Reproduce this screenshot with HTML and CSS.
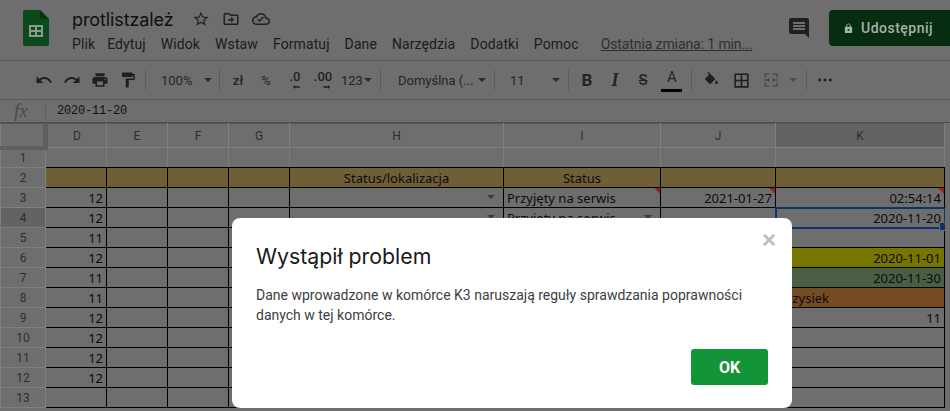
FILE: index.html
```html
<!DOCTYPE html>
<html lang="pl">
<head>
<meta charset="utf-8">
<title>protlistzależ</title>
<link rel="stylesheet" href="styles.css">
</head>
<body>
<div class="page">
  <header class="top">
    <svg class="logo" viewBox="0 0 26 36"><path fill="#0c4a1c" d="M2 0h15l9 9v25a2 2 0 0 1-2 2H2a2 2 0 0 1-2-2V2a2 2 0 0 1 2-2z"/><path fill="#08350f" d="M17 0l9 9h-9z"/><path fill="#8a9a8e" d="M6 15h14v12H6zm2 2v3h4v-3zm6 0v3h4v-3zm-6 5v3h4v-3zm6 0v3h4v-3z" fill-rule="evenodd"/></svg>
    <div class="titles">
      <div class="title-row">
        <span class="doc-title">protlistzależ</span>
        <svg class="ti star" viewBox="0 0 24 24"><path d="M22 9.24l-7.19-.62L12 2 9.19 8.63 2 9.24l5.46 4.73L5.82 21 12 17.27 18.18 21l-1.63-7.03L22 9.24zM12 15.4l-3.76 2.27 1-4.28-3.32-2.88 4.38-.38L12 6.1l1.71 4.04 4.38.38-3.32 2.88 1 4.28L12 15.4z"/></svg>
        <svg class="ti folder" viewBox="0 0 24 24"><path d="M20 6h-8l-2-2H4c-1.1 0-2 .9-2 2v12c0 1.1.9 2 2 2h16c1.1 0 2-.9 2-2V8c0-1.1-.9-2-2-2zm0 12H4V6h5.2l2 2H20v10zm-8-1l4-4-4-4v3H8v2h4v3z"/></svg>
        <svg class="ti cloud" viewBox="0 0 24 24"><path d="M19.35 10.04C18.67 6.59 15.64 4 12 4 9.11 4 6.6 5.64 5.35 8.04 2.34 8.36 0 10.91 0 14c0 3.31 2.69 6 6 6h13c2.76 0 5-2.24 5-5 0-2.64-2.05-4.78-4.65-4.96zM19 18H6c-2.21 0-4-1.79-4-4 0-2.05 1.53-3.76 3.56-3.97l1.07-.11.5-.95C8.08 7.14 9.94 6 12 6c2.62 0 4.88 1.86 5.39 4.43l.3 1.5 1.53.11c1.56.1 2.78 1.41 2.78 2.96 0 1.65-1.35 3-3 3zm-9-2l-3-3 1.4-1.4 1.6 1.6 4.6-4.6L16 10l-6 6z"/></svg>
      </div>
      <nav class="menu">
        <span class="plik">Plik</span><span>Edytuj</span><span>Widok</span><span>Wstaw</span><span>Formatuj</span><span>Dane</span><span>Narzędzia</span><span>Dodatki</span><span>Pomoc</span><span class="last-edit">Ostatnia zmiana: 1 min...</span>
      </nav>
    </div>
    <svg class="comment" viewBox="0 0 24 24"><path d="M21.99 4c0-1.1-.89-2-1.99-2H4c-1.1 0-2 .9-2 2v12c0 1.1.9 2 2 2h14l4 4-.01-18zM18 14H6v-2h12v2zm0-3H6V9h12v2zm0-3H6V6h12v2z"/></svg>
    <div class="share">
      <svg class="lock" viewBox="0 0 24 24"><path d="M18 8h-1V6c0-2.76-2.24-5-5-5S7 3.24 7 6v2H6c-1.1 0-2 .9-2 2v10c0 1.1.9 2 2 2h12c1.1 0 2-.9 2-2V10c0-1.1-.9-2-2-2zm-6 9c-1.1 0-2-.9-2-2s.9-2 2-2 2 .9 2 2-.9 2-2 2zm3.1-9H8.9V6c0-1.71 1.39-3.1 3.1-3.1 1.71 0 3.1 1.39 3.1 3.1v2z"/></svg>
      <span>Udostępnij</span>
    </div>
  </header>

  <div class="toolbar">
    <span class="tb"><svg viewBox="0 0 24 24"><path d="M12.5 8c-2.65 0-5.05.99-6.9 2.6L2 7v9h9l-3.62-3.62c1.39-1.16 3.16-1.88 5.12-1.88 3.54 0 6.55 2.31 7.6 5.5l2.37-.78C21.08 11.03 17.15 8 12.5 8z"/></svg></span>
    <span class="tb"><svg viewBox="0 0 24 24"><path d="M18.4 10.6C16.55 8.99 14.15 8 11.5 8c-4.65 0-8.58 3.03-9.96 7.22L3.9 16c1.05-3.19 4.05-5.5 7.6-5.5 1.95 0 3.73.72 5.12 1.88L13 16h9V7l-3.6 3.6z"/></svg></span>
    <span class="tb"><svg viewBox="0 0 24 24"><path d="M19 8H5c-1.66 0-3 1.34-3 3v6h4v4h12v-4h4v-6c0-1.66-1.34-3-3-3zm-3 11H8v-5h8v5zm3-7c-.55 0-1-.45-1-1s.45-1 1-1 1 .45 1 1-.45 1-1 1zm-1-9H6v4h12V3z"/></svg></span>
    <span class="tb"><svg viewBox="0 0 24 24"><path d="M18 4V3c0-.55-.45-1-1-1H5c-.55 0-1 .45-1 1v4c0 .55.45 1 1 1h12c.55 0 1-.45 1-1V6h1v4H9v11c0 .55.45 1 1 1h2c.55 0 1-.45 1-1v-9h8V4h-3z"/></svg></span>
    <i class="sep s1"></i>
    <span class="drop zoom">100%<b class="caret"></b></span>
    <i class="sep"></i>
    <span class="tb txt w-zl">zł</span>
    <span class="tb txt w-pc">%</span>
    <span class="tb dec"><span>.0</span><svg viewBox="0 0 12 6"><path d="M0 3l3-3v2h7v2H3v2z"/></svg></span>
    <span class="tb dec"><span>.00</span><svg viewBox="0 0 12 6"><path d="M12 3L9 0v2H2v2h7v2z"/></svg></span>
    <span class="drop num">123<b class="caret small"></b></span>
    <i class="sep"></i>
    <span class="drop font">Domyślna (...<b class="caret"></b></span>
    <i class="sep"></i>
    <span class="drop size">11<b class="caret"></b></span>
    <i class="sep"></i>
    <span class="tb fmt b">B</span>
    <span class="tb fmt it">I</span>
    <span class="tb fmt st">S</span>
    <span class="tb colour"><span>A</span><i></i></span>
    <i class="sep s2"></i>
    <span class="tb m-fill"><svg class="fill" viewBox="0 0 24 24"><path d="M16.56 8.94L7.62 0 6.21 1.41l2.38 2.38-5.15 5.15c-.59.59-.59 1.54 0 2.12l5.5 5.5c.29.29.68.44 1.06.44s.77-.15 1.06-.44l5.5-5.5c.59-.58.59-1.53 0-2.12zM19 11.5s-2 2.17-2 3.5c0 1.1.9 2 2 2s2-.9 2-2c0-1.33-2-3.5-2-3.5z"/></svg></span>
    <span class="tb m-next"><svg class="borders" viewBox="0 0 24 24"><path d="M3 3v18h18V3H3zm8 16H5v-6h6v6zm0-8H5V5h6v6zm8 8h-6v-6h6v6zm0-8h-6V5h6v6z"/></svg></span>
    <span class="tb off m-next"><svg viewBox="0 0 24 24"><path d="M3 3h7v2H5v4H3zm11 0h7v6h-2V5h-5zM3 15h2v4h5v2H3zm16 0h2v6h-7v-2h5zM3 11h5V9l3 3-3 3v-2H3zm18 0h-5V9l-3 3 3 3v-2h5z"/></svg></span>
    <span class="merge-caret"><b class="caret off-caret"></b></span>
    <i class="sep s3"></i>
    <span class="tb m-dots"><svg class="dots" viewBox="0 0 16 4"><circle cx="2" cy="2" r="1.7"/><circle cx="8" cy="2" r="1.7"/><circle cx="14" cy="2" r="1.7"/></svg></span>
  </div>

  <div class="formula">
    <span class="fx">fx</span>
    <i class="fsep"></i>
    <span class="fval">2020-11-20</span>
  </div>

  <table class="sheet">
    <colgroup>
      <col class="c-rh"><col class="c-s"><col class="c-s"><col class="c-s"><col class="c-s"><col class="c-h"><col class="c-i"><col class="c-j"><col class="c-k"><col>
    </colgroup>
    <thead>
      <tr><th class="corner"></th><th>D</th><th>E</th><th>F</th><th>G</th><th>H</th><th>I</th><th>J</th><th class="on">K</th><th class="rest"></th></tr>
    </thead>
    <tbody>
      <tr class="first"><th>1</th><td></td><td></td><td></td><td></td><td></td><td></td><td></td><td></td><td class="rest"></td></tr>
      <tr class="band"><th>2</th><td></td><td></td><td></td><td></td><td class="ctr">Status/lokalizacja</td><td class="ctr">Status</td><td></td><td></td><td class="rest"></td></tr>
      <tr><th>3</th><td class="r">12</td><td></td><td></td><td></td><td class="dd"></td><td class="note">Przyjęty na serwis</td><td class="r note">2021-01-27</td><td class="r note">02:54:14</td><td class="rest"></td></tr>
      <tr><th class="on">4</th><td class="r">12</td><td></td><td></td><td></td><td class="dd"></td><td class="dd">Przyjęty na serwis</td><td></td><td class="r sel">2020-11-20</td><td class="rest"></td></tr>
      <tr><th>5</th><td class="r">11</td><td></td><td></td><td></td><td></td><td></td><td></td><td></td><td class="rest"></td></tr>
      <tr><th>6</th><td class="r">12</td><td></td><td></td><td></td><td></td><td></td><td></td><td class="r yellow">2020-11-01</td><td class="rest"></td></tr>
      <tr><th>7</th><td class="r">11</td><td></td><td></td><td></td><td></td><td></td><td></td><td class="r green">2020-11-30</td><td class="rest"></td></tr>
      <tr><th>8</th><td class="r">11</td><td></td><td></td><td></td><td></td><td></td><td></td><td class="orange">Krzysiek</td><td class="rest"></td></tr>
      <tr><th>9</th><td class="r">12</td><td></td><td></td><td></td><td></td><td></td><td></td><td class="r">11</td><td class="rest"></td></tr>
      <tr><th>10</th><td class="r">12</td><td></td><td></td><td></td><td></td><td></td><td></td><td></td><td class="rest"></td></tr>
      <tr><th>11</th><td class="r">12</td><td></td><td></td><td></td><td></td><td></td><td></td><td></td><td class="rest"></td></tr>
      <tr><th>12</th><td class="r">12</td><td></td><td></td><td></td><td></td><td></td><td></td><td></td><td class="rest"></td></tr>
      <tr><th>13</th><td></td><td></td><td></td><td></td><td></td><td></td><td></td><td></td><td class="rest"></td></tr>
    </tbody>
  </table>

  <section class="modal">
    <span class="close">×</span>
    <h1>Wystąpił problem</h1>
    <p>Dane wprowadzone w komórce K3 naruszają reguły sprawdzania poprawności danych w tej komórce.</p>
    <div class="actions"><span class="ok">OK</span></div>
  </section>
</div>
</body>
</html>
```

FILE: styles.css
```css
* { box-sizing: border-box; }
html, body { margin: 0; padding: 0; }
body { background: #6e6e6e; font-family: Roboto, "Liberation Sans", sans-serif; color: #1c1c1c; }
.page { position: relative; width: 950px; height: 411px; overflow: hidden; background: #6e6e6e; }

/* header */
.top { height: 61px; display: flex; align-items: flex-start; border-bottom: 1px solid #5a5a5a; }
.logo { width: 26px; height: 36px; margin: 10px 0 0 23px; flex: none; }
.titles { margin-left: 23px; flex: none; width: 718px; }
.title-row { height: 30px; display: flex; align-items: center; padding-top: 8px; }
.doc-title { font-family: Inter, sans-serif; font-size: 18px; color: #101010; width: 120px; letter-spacing: -.1px; }
.ti { fill: #222; width: 18px; height: 18px; flex: none; }
.star { margin-right: 12px; }
.folder { margin-right: 12px; }
.menu { display: flex; font-size: 14px; color: #1b1b1b; margin-top: 5px; height: 20px; line-height: 18px; }
.menu span { margin-right: 15px; letter-spacing: .1px; white-space: nowrap; }
.menu .plik { margin-right: 12px; }
.menu .last-edit { margin-left: 7px; margin-right: 0; color: #2f2f2f; text-decoration: underline; letter-spacing: -.1px; }
.comment { width: 24px; height: 24px; fill: #1f1f1f; margin: 16px 0 0 -3px; flex: none; }
.share { width: 130px; height: 36px; margin: 10px 0 0 18px; background: #062d12; border-radius: 4px; color: #a5b2a9; display: flex; align-items: center; padding-left: 14px; font-size: 14px; font-weight: 500; letter-spacing: .5px; flex: none; }
.lock { width: 11px; height: 11px; fill: #a5b2a9; margin-right: 7px; flex: none; }

/* toolbar */
.toolbar { height: 39px; display: flex; align-items: center; padding-left: 30px; border-bottom: 1px solid #5a5a5a; font-size: 13px; color: #242424; white-space: nowrap; }
.tb { width: 28px; height: 24px; display: flex; align-items: center; justify-content: center; flex: none; position: relative; }
.tb svg { width: 18px; height: 18px; fill: #1f1f1f; }
.sep { width: 1px; height: 20px; background: #5c5c5c; flex: none; margin: 0 1px 0 0; }
.s1 { margin-left: 3px; }
.drop { display: flex; align-items: center; flex: none; }
.zoom { width: 72px; padding-left: 14px; }
.zoom .caret { margin-left: 12px; }
.caret { width: 0; height: 0; border: 4px solid transparent; border-top: 4px solid #2a2a2a; border-bottom: 0; display: block; flex: none; margin-left: auto; }
.caret.small { margin-left: 1px; }
.w-zl { width: 26px; margin-left: 4px; font-weight: 500; }
.w-pc { width: 30px; }
.dec { display: block; width: 28px; font-weight: 500; text-align: center; font-size: 13px; line-height: 18px; }
.dec svg { position: absolute; width: 8px; height: 4px; left: 12px; top: 17px; }
.dec + .dec svg { left: 13px; }
.num { width: 39px; margin-left: 4px; }
.font { width: 112px; padding: 0 8px 0 16px; }
.size { width: 72px; padding: 0 8px 0 14px; }
.fmt { font-weight: 700; font-size: 17px; }
.b { margin-left: 3px; }
.it { font-style: italic; font-family: "Liberation Serif", serif; font-size: 18px; }
.st { font-size: 15px; font-weight: 500; text-decoration: line-through; }
.colour { display: block; text-align: center; font-size: 15px; line-height: 18px; margin-left: 1px; }
.colour i { position: absolute; left: 3px; bottom: 0; width: 21px; height: 3px; background: #000; }
.s2 { margin-left: 5px; }
.m-fill { margin-left: 4px; }
.m-next { margin-left: 2px; }
.m-dots { margin-left: 3px; }
.fill { width: 17px !important; height: 17px !important; }
.borders { width: 19px !important; height: 19px !important; }
.off svg { fill: #4c4c4c; }
.merge-caret { width: 15px; flex: none; display: flex; justify-content: center; }
.off-caret { border-top-color: #4c4c4c; margin: 0; }
.s3 { margin-left: 6px; }
.dots { width: 14px !important; height: 4px !important; }

/* formula bar */
.formula { height: 23px; display: flex; align-items: center; border-bottom: 1px solid #4e4e4e; }
.fx { width: 45px; padding-left: 14px; font-family: "Liberation Serif", serif; font-style: italic; font-size: 19px; color: #4a4a4a; }
.fsep { width: 1px; height: 16px; background: #5c5c5c; flex: none; }
.fval { margin-left: 11px; font-family: "Liberation Mono", monospace; font-size: 12px; letter-spacing: -.2px; color: #111; }

/* sheet */
.sheet { border-collapse: collapse; table-layout: fixed; width: 950px; font-family: "Noto Sans", sans-serif; font-size: 13px; color: #0c0c0c; }
.c-rh { width: 45px; }
.c-s { width: 61px; }
.c-h { width: 214px; }
.c-i { width: 157px; }
.c-j { width: 115px; }
.c-k { width: 169px; }
.sheet tr { height: 20px; }
.sheet thead tr { height: 24px; }
.sheet th { font-family: Roboto, sans-serif; font-weight: 400; font-size: 12px; color: #2e2e2e; padding: 0; border: 1px solid #7f7f7f; background: #6e6e6e; }
.sheet thead th { border-color: #555 #808080 #808080; }
.sheet th.on { background: #616365; }
.sheet td { position: relative; padding: 0 3px; border: 1px solid #000; white-space: nowrap; overflow: visible; line-height: 18px; }
.sheet tbody tr:first-child td { border-color: #7c7c7c; border-bottom-color: #000; }
.sheet th.corner { border-right: 5px solid #5f5f5f; border-bottom: 4px solid #5f5f5f; }
.sheet .rest { border: 0; background: #6e6e6e; }
.sheet tbody td.rest { border-left: 1px solid #000; }
.sheet tbody tr:first-child td.rest { border-left-color: #7c7c7c; }
.band td { background: #6e5f37; }
.band .rest { background: #6e6e6e; }
.r { text-align: right; }
.ctr { text-align: center; }
.yellow { background: #757500; }
.green { background: #4a5e44; }
.orange { background: #754b24; }
.note::after { content: ""; position: absolute; top: 0; right: 0; border: 3px solid transparent; border-top-color: #8a2a20; border-right-color: #8a2a20; }
.dd::after { content: ""; position: absolute; top: 7px; right: 8px; border: 4px solid transparent; border-top-color: #3c3c3c; border-bottom: 0; }
.sel { outline: 2px solid #10306e; outline-offset: -1px; }
.sel::after { content: ""; position: absolute; right: -4px; bottom: -4px; width: 7px; height: 7px; background: #10306e; border: 1px solid #6e6e6e; }

/* dialog */
.modal { position: absolute; left: 232px; top: 218px; width: 560px; height: 190px; background: #fff; border-radius: 8px; padding: 24px 24px 23px; display: flex; flex-direction: column; }
.modal h1 { margin: 0; font-family: Inter, sans-serif; font-weight: 400; font-size: 21.3px; line-height: 28px; color: #1a1a1a; }
.modal p { margin: 15px 0 0; font-size: 14px; line-height: 20px; color: #3c4043; width: 512px; }
.close { position: absolute; top: 9px; right: 16px; font-family: "Liberation Sans", sans-serif; font-size: 24px; font-weight: 700; line-height: 26px; color: #bdbdbd; }
.actions { margin-top: auto; display: flex; justify-content: flex-end; }
.ok { width: 77px; height: 36px; background: #149438; border-radius: 3px; color: #fff; font-weight: 700; font-size: 16px; display: flex; align-items: center; justify-content: center; }
```
